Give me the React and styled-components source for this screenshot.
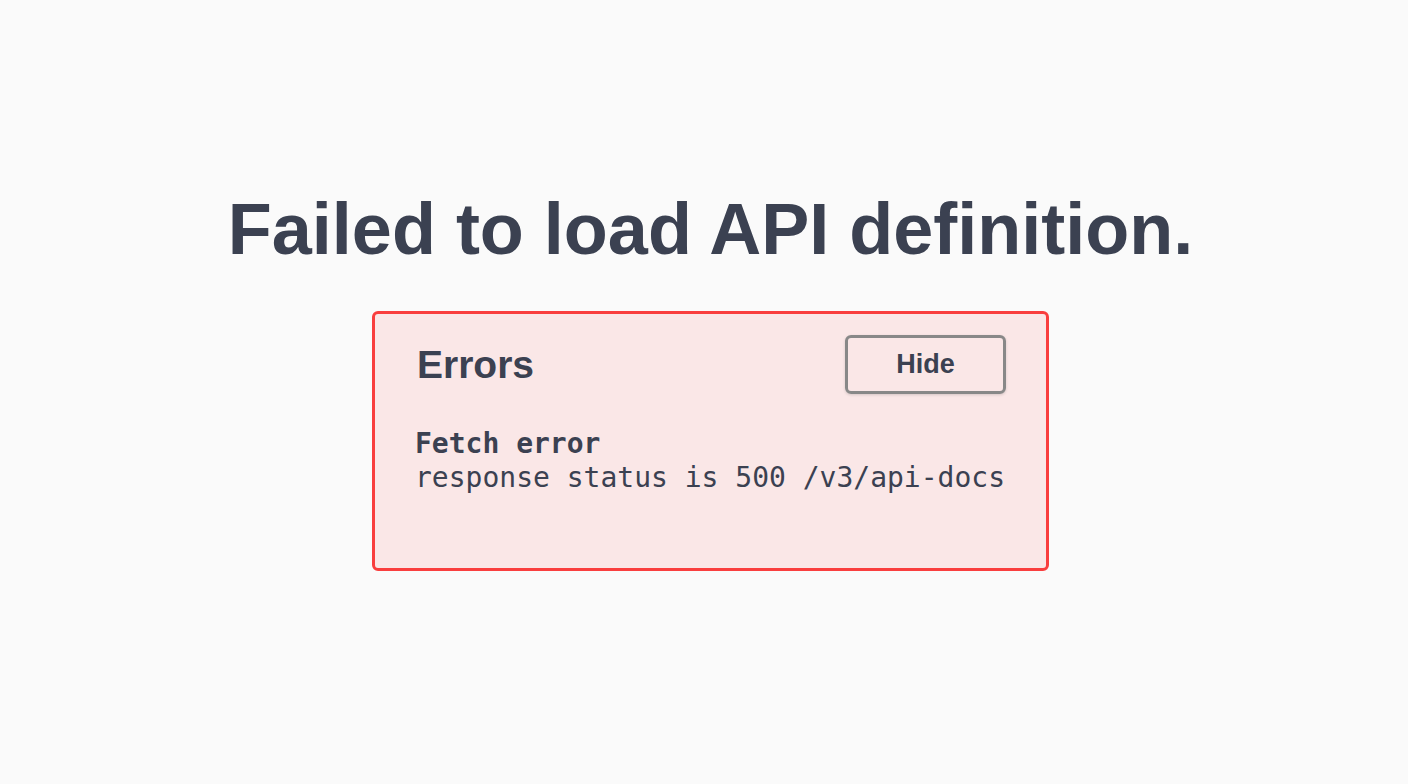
import React from 'react'
import styled, { createGlobalStyle } from 'styled-components'

const GlobalStyle = createGlobalStyle`
  html, body {
    margin: 0;
    padding: 0;
    background: #fafafa;
  }
  * {
    box-sizing: border-box;
  }
`

const Page = styled.div`
  min-height: 100vh;
  display: flex;
  flex-direction: column;
  align-items: center;
  padding: 193px 0 0 13px;
  font-family: 'Liberation Sans', Arial, sans-serif;
  color: #3b4151;
`

const Title = styled.h1`
  margin: 0;
  font-size: 72px;
  line-height: 72px;
  font-weight: 700;
`

const ErrorsBox = styled.div`
  width: 677px;
  margin-top: 46px;
  padding: 21px 40px 73px 40px;
  border: 3px solid #f93e3e;
  border-radius: 6px;
  background: #fae7e7;
`

const Header = styled.div`
  display: flex;
  align-items: center;
  justify-content: space-between;
`

const Heading = styled.h4`
  margin: 0 0 0 2px;
  font-size: 39px;
  line-height: 1;
  font-weight: 700;
`

const HideButton = styled.button`
  width: 161px;
  height: 59px;
  border: 3px solid #888;
  border-radius: 6px;
  background: transparent;
  box-shadow: 0 1px 3px rgba(0, 0, 0, 0.15);
  font-family: 'Liberation Sans', Arial, sans-serif;
  font-size: 27px;
  font-weight: 700;
  color: #3b4151;
  cursor: pointer;
`

const Message = styled.div`
  margin-top: 33px;
  font-family: 'DejaVu Sans Mono', monospace;
  font-size: 28px;
  line-height: 34px;
`

const MessageTitle = styled.div`
  font-weight: 700;
`

function App() {
  return (
    <>
      <GlobalStyle />
      <Page>
        <Title>Failed to load API definition.</Title>
        <ErrorsBox>
          <Header>
            <Heading>Errors</Heading>
            <HideButton>Hide</HideButton>
          </Header>
          <Message>
            <MessageTitle>Fetch error</MessageTitle>
            <div>response status is 500 /v3/api-docs</div>
          </Message>
        </ErrorsBox>
      </Page>
    </>
  )
}

export default App
